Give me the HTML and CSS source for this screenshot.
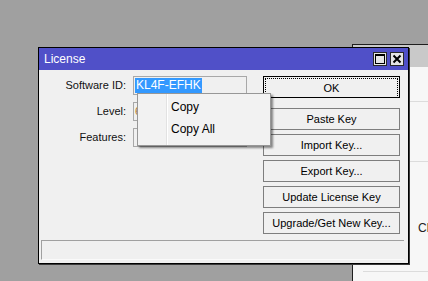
FILE: index.html
```html
<!DOCTYPE html>
<html lang="en">
<head>
    <meta charset="UTF-8">
    <meta name="viewport" content="width=device-width, initial-scale=1.0">
    <title>License</title>
    <link rel="stylesheet" href="styles.css">
</head>
<body>
    <div class="desktop">
        <!-- window behind the dialog -->
        <div class="back-window">
            <div class="back-title"></div>
            <div class="back-body">
                <div class="back-line line-1"></div>
                <div class="back-line line-2"></div>
                <div class="back-text">Cl</div>
                <div class="back-line line-3"></div>
            </div>
        </div>

        <div class="dialog">
            <div class="title-bar">
                <span class="title">License</span>
                <div class="title-buttons">
                    <svg class="title-btn" width="14" height="14" viewBox="0 0 14 14">
                        <rect x="0.5" y="0.5" width="13" height="13" fill="#e6e6e6" stroke="#2a2a2a"/>
                        <rect x="2.5" y="2.5" width="9" height="9" fill="none" stroke="#000"/>
                        <line x1="2" y1="3.5" x2="12" y2="3.5" stroke="#000"/>
                    </svg>
                    <svg class="title-btn" width="14" height="14" viewBox="0 0 14 14">
                        <rect x="0.5" y="0.5" width="13" height="13" fill="#e6e6e6" stroke="#2a2a2a"/>
                        <path d="M3.5 3.5 L10.5 10.5 M10.5 3.5 L3.5 10.5" stroke="#000" stroke-width="2"/>
                    </svg>
                </div>
            </div>

            <div class="content">
                <div class="form">
                    <label class="label">Software ID:</label>
                    <div class="field"><span class="selected">KL4F-EFHK</span></div>
                    <label class="label">Level:</label>
                    <div class="field level">6</div>
                    <label class="label">Features:</label>
                    <div class="field"></div>
                </div>

                <div class="buttons">
                    <button class="btn btn-default"><span>OK</span></button>
                    <button class="btn">Paste Key</button>
                    <button class="btn">Import Key...</button>
                    <button class="btn">Export Key...</button>
                    <button class="btn">Update License Key</button>
                    <button class="btn">Upgrade/Get New Key...</button>
                </div>
            </div>

            <div class="status-bar"></div>
        </div>

        <!-- context menu over the Software ID field -->
        <div class="context-menu">
            <div class="menu-item">Copy</div>
            <div class="menu-item">Copy All</div>
        </div>
    </div>
</body>
</html>
```

FILE: styles.css
```css
body {
    margin: 0;
    padding: 0;
    background-color: #a0a0a0;
    font-family: "Liberation Sans", Arial, sans-serif;
    font-size: 11px;
    color: #000;
    overflow: hidden;
}

.desktop {
    position: relative;
    width: 428px;
    height: 281px;
    overflow: hidden;
}

/* back window */
.back-window {
    position: absolute;
    left: 352px;
    top: 44px;
    width: 75px;
    height: 236px;
    border-left: 1px solid #1e1e1e;
    border-top: 1px solid #1e1e1e;
    background: #f7f7f7;
}

.back-title {
    height: 22px;
    background: #c9c9c9;
}

.back-body {
    position: relative;
}

.back-line {
    position: absolute;
    left: 10px;
    right: 0;
    height: 1px;
    background: #dcdcdc;
}

.line-1 { top: 34px; }
.line-2 { top: 94px; }
.line-3 { top: 204px; }

.back-text {
    position: absolute;
    left: 65px;
    top: 154px;
    font-size: 12px;
    color: #222;
}

/* dialog */
.dialog {
    position: absolute;
    left: 38px;
    top: 47px;
    width: 369px;
    height: 215px;
    border: 1px solid #000;
    box-shadow: 1px 1px 0 #3a3a3a;
    background: #f0f0f0;
    display: flex;
    flex-direction: column;
}

.title-bar {
    height: 22px;
    background: #5050c8;
    display: flex;
    align-items: center;
    justify-content: space-between;
    padding: 0 4px 0 5px;
}

.title {
    color: #fff;
    font-size: 12px;
}

.title-buttons {
    display: flex;
    gap: 3px;
}

.title-btn {
    display: block;
}

.content {
    flex: 1;
    display: flex;
    padding-top: 6px;
}

.form {
    display: grid;
    grid-template-columns: 87px 114px;
    grid-auto-rows: 19px;
    column-gap: 7px;
    row-gap: 7px;
    align-content: start;
}

.label {
    text-align: right;
    line-height: 19px;
    color: #111;
}

.field {
    box-sizing: border-box;
    border: 1px solid #a8a8a8;
    background: #f0f0f0;
    padding: 1px 1px;
    line-height: 15px;
}

.field.level {
    color: #b07a30;
}

.selected {
    display: inline-block;
    background: #3399ff;
    color: #fff;
    font-size: 12px;
    padding: 0 1px;
}

.buttons {
    display: flex;
    flex-direction: column;
    gap: 4px;
    margin-left: 16px;
    width: 137px;
}

.btn {
    box-sizing: border-box;
    height: 22px;
    width: 137px;
    border: 1px solid #7e7e7e;
    background: #f0f0f0;
    font-family: "Liberation Sans", Arial, sans-serif;
    font-size: 11px;
    color: #000;
    padding: 0;
    margin: 0;
}

.btn-default {
    border-color: #000;
    margin-bottom: 6px;
    padding: 1px;
}

.btn-default span {
    display: block;
    height: 18px;
    line-height: 18px;
    border: 1px dotted #000;
}

.status-bar {
    height: 18px;
    margin: 0 4px 3px 2px;
    border-top: 1px solid #a0a0a0;
    border-left: 1px solid #a0a0a0;
    border-bottom: 1px solid #fafafa;
}

/* context menu */
.context-menu {
    position: absolute;
    left: 137px;
    top: 93px;
    width: 132px;
    height: 47px;
    padding: 2px 0;
    border: 1px solid #979797;
    background: #f2f2f2 linear-gradient(to right, transparent 28px, #e2e2e2 28px, #e2e2e2 29px, #fff 29px, #fff 30px, transparent 30px);
    box-shadow: 2px 2px 2px rgba(0, 0, 0, 0.45);
}

.menu-item {
    height: 22px;
    line-height: 22px;
    padding-left: 33px;
    font-size: 12px;
    color: #000;
}
```
